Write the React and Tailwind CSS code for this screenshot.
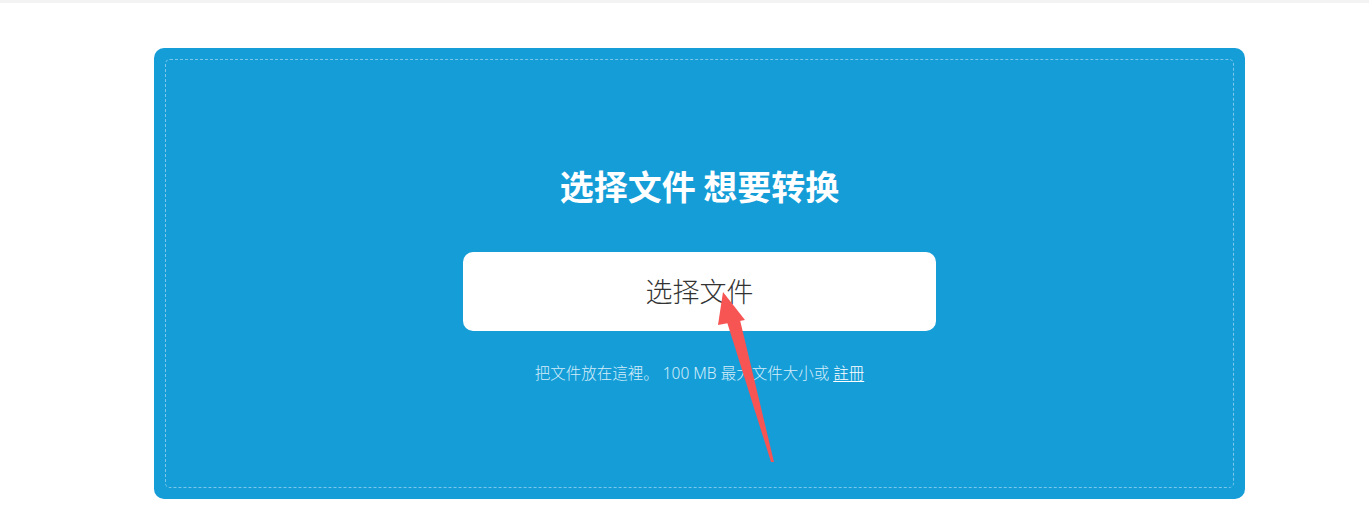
export default function App() {
  return (
    <div className="relative w-[1369px] h-[525px] bg-white overflow-hidden" style={{ fontFamily: '"Noto Sans", "Noto Sans CJK SC", sans-serif' }}>
      <div className="h-[3px] bg-[#f3f3f3]" />
      <div className="ml-[154px] mt-[45px] w-[1091px] h-[451px] rounded-[10px] bg-[#159dd8] p-[11px]">
        <div className="h-full rounded-[5px] border border-dashed border-[#7cc6ea] flex flex-col items-center pt-[106px]">
          <h1 className="text-[34px] leading-[40px] font-bold text-white" style={{ fontFamily: '"Noto Sans CJK SC", sans-serif' }}>
            选择文件 想要转换
          </h1>
          <button className="mt-[46px] w-[473px] h-[79px] rounded-[10px] bg-white text-[27px] font-light text-[#333333] flex items-center justify-center" style={{ fontFamily: '"Noto Sans CJK SC", sans-serif' }}>
            选择文件
          </button>
          <p className="mt-[32px] text-[15.5px] leading-[20px] font-light text-[#d4edf8]">
            把文件放在這裡。 100 MB 最大文件大小或 <span className="text-white underline underline-offset-2">註冊</span>
          </p>
        </div>
      </div>
      <svg className="absolute left-0 top-0 pointer-events-none" width="1369" height="525" viewBox="0 0 1369 525">
        <polygon points="723,292 745,320 718,325" fill="#f75454" />
        <polygon points="727,322 740,320 774,462 771,462" fill="#f75454" />
      </svg>
    </div>
  );
}
